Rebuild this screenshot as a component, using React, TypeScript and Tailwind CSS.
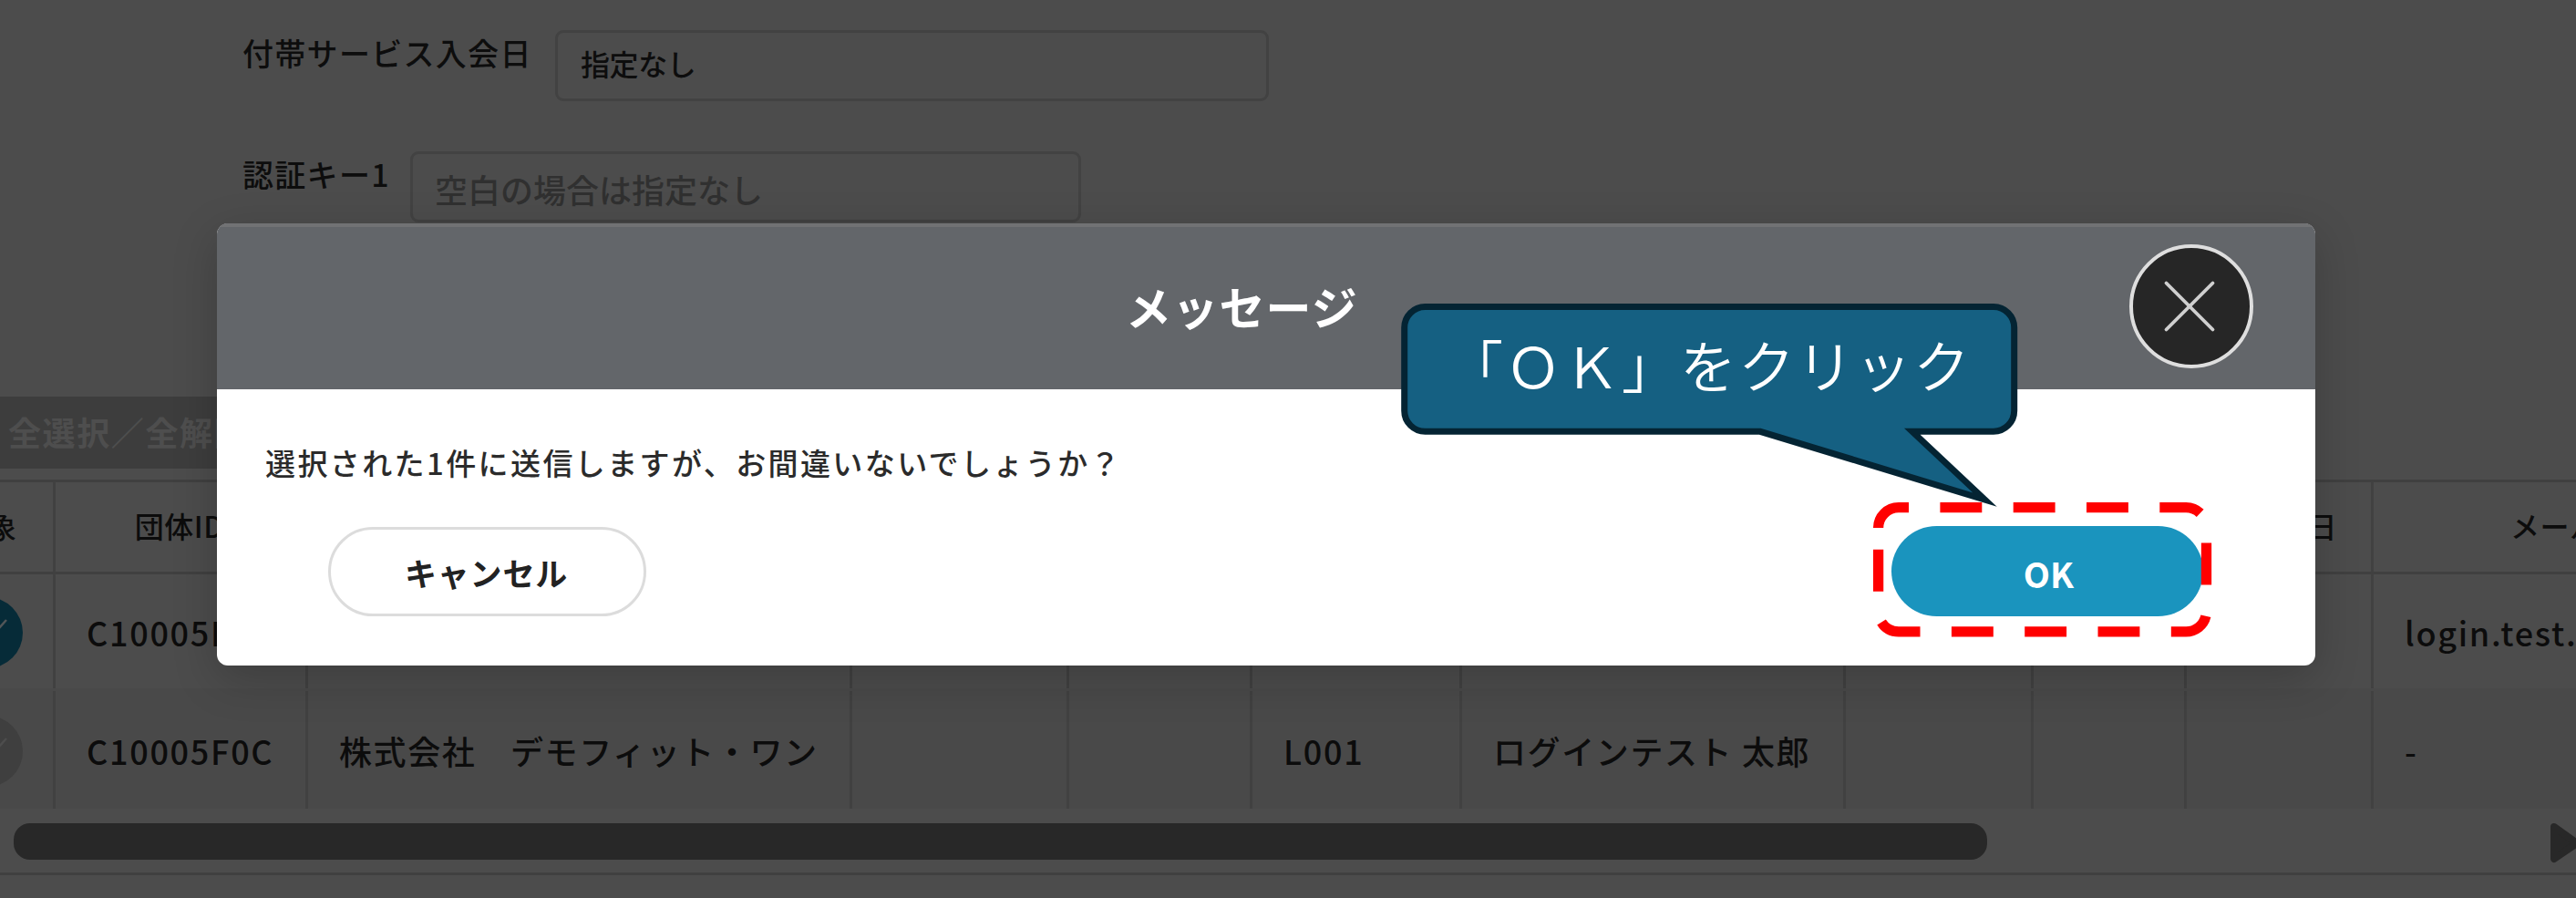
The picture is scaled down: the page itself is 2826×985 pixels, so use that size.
import { X } from 'lucide-react'

const COLUMNS = [
  { w: 'w-[147px]', head: '対象', headClass: 'justify-center' },
  { w: 'w-[277px]', head: '団体ID', headClass: 'justify-center pr-[2px]' },
  { w: 'w-[597px]', head: '', headClass: '' },
  { w: 'w-[238px]', head: '', headClass: '' },
  { w: 'w-[201px]', head: '', headClass: '' },
  { w: 'w-[230px]', head: '', headClass: '' },
  { w: 'w-[421px]', head: '', headClass: '' },
  { w: 'w-[206px]', head: '', headClass: '' },
  { w: 'w-[168px]', head: '', headClass: '' },
  { w: 'w-[205px]', head: '日', headClass: 'justify-end pr-[37px]' },
  { w: 'w-[500px]', head: 'メール', headClass: 'justify-start pl-[150px]' },
]

const ROWS = [
  {
    checked: true,
    rowClass: 'h-[125px]',
    cells: ['C10005F0C', '', '', '', '', '', '', '', '', 'login.test.o'],
  },
  {
    checked: false,
    rowClass: 'h-[132px] border-t-[3px] border-[#494949] bg-[#494949]',
    cells: ['C10005F0C', '株式会社　デモフィット・ワン', '', '', 'L001', 'ログインテスト 太郎', '', '', '', '-'],
  },
]

function CheckCircle({ checked }: { checked: boolean }) {
  return (
    <span
      className={`flex size-[78px] items-center justify-center rounded-full ${
        checked ? 'bg-[#062b38] text-[#525658]' : 'bg-[#3f3f3f] text-[#4d4d4d]'
      }`}
    >
      <svg viewBox="0 0 78 78" className="size-full" fill="none" stroke="currentColor" strokeWidth="2.5">
        <path d="M20 38 L35 53 L60 25" />
      </svg>
    </span>
  )
}

function SearchForm() {
  return (
    <div className="flex h-[435px] flex-col pt-[33px] pl-[266px] font-medium text-[#0d0d0d]">
      <div className="flex h-[133px] items-start">
        <label className="w-[343px] text-[34px] leading-[50px] tracking-[1.3px]">付帯サービス入会日</label>
        <div className="flex h-[78px] w-[783px] items-center rounded-[9px] border-[3px] border-[#424242] pb-[6px] pl-[25px] text-[32px] tracking-[-0.4px]">
          指定なし
        </div>
      </div>
      <div className="flex items-start">
        <label className="w-[184px] text-[34px] leading-[50px] tracking-[1.3px]">認証キー1</label>
        <div className="flex h-[78px] w-[736px] items-center rounded-[9px] border-[3px] border-[#424242] pt-1 pl-[24px] text-[36px] text-[#303030]">
          空白の場合は指定なし
        </div>
      </div>
    </div>
  )
}

function ResultTable() {
  return (
    <div className="-ml-[86px] w-[3193px] border-t-[3px] border-[#404040] font-medium text-[#0c0c0c]">
      <div className="flex h-[101px] border-b-[3px] border-[#404040]">
        {COLUMNS.map((col, i) => (
          <div
            key={i}
            className={`flex shrink-0 items-center border-r-[3px] border-[#414141] pb-[4px] text-[32px] tracking-[0.5px] ${col.w} ${col.headClass}`}
          >
            {col.head}
          </div>
        ))}
      </div>
      {ROWS.map((row, r) => (
        <div key={r} className={`flex ${row.rowClass}`}>
          <div className="flex w-[147px] shrink-0 items-center justify-center border-r-[3px] border-[#414141] pt-[3px]">
            <CheckCircle checked={row.checked} />
          </div>
          {row.cells.map((cell, i) => (
            <div
              key={i}
              className={`flex shrink-0 items-center whitespace-nowrap border-r-[3px] border-[#414141] pl-[34px] text-[36px] ${COLUMNS[i + 1].w} ${
                /^[\w.-]+$/.test(cell) ? 'tracking-[1.7px]' : 'tracking-[1.6px]'
              }`}
            >
              {cell}
            </div>
          ))}
        </div>
      ))}
    </div>
  )
}

function ScrollBar() {
  return (
    <div className="flex h-[73px] items-start border-b-[3px] border-[#404040] pt-[16px] pl-[15px]">
      <div className="h-[40px] w-[2165px] rounded-[18px] bg-[#282828]" />
      <svg className="ml-[617px] h-[44px] w-[29px] shrink-0" viewBox="0 0 29 44">
        <path
          d="M5 4 L30 22 L5 39 Z"
          fill="#282828"
          stroke="#282828"
          strokeWidth="8"
          strokeLinejoin="round"
        />
      </svg>
    </div>
  )
}

function MessageDialog() {
  return (
    <div className="absolute top-[245px] left-[238px] flex h-[485px] w-[2302px] flex-col overflow-hidden rounded-[12px] bg-white shadow-[0_14px_50px_rgba(0,0,0,0.2)]">
      <div className="flex h-[182px] items-center border-t-[4px] border-[#717274] bg-[#63666a] pr-[68px] pb-[5px]">
        <h2 className="flex-1 pl-[151px] text-center text-[50px] font-bold tracking-[1.2px] text-white">メッセージ</h2>
        <button className="flex size-[136px] items-center justify-center rounded-full border-[4px] border-[#dedede] bg-[#262626] pr-[4px]">
          <X className="size-[102px] text-[#cfcfcf]" strokeWidth={0.9} />
        </button>
      </div>
      <p className="pt-[55px] pl-[53px] text-[33px] leading-[50px] font-medium tracking-[2.4px] text-[#2b2b2b]">
        選択された1件に送信しますが、お間違いないでしょうか？
      </p>
      <div className="flex justify-between pt-[45px] pr-[123px] pl-[122px]">
        <button className="mt-px h-[98px] w-[349px] rounded-full border-[3px] border-[#dcdcdc] pt-[2px] pr-[2px] text-[35px] font-bold tracking-[0.8px] text-[#222]">
          キャンセル
        </button>
        <button className="h-[99px] w-[342px] rounded-full bg-[#1a94be] pt-[3px] pl-[3px] text-[38px] font-bold text-white">
          OK
        </button>
      </div>
    </div>
  )
}

function Annotation() {
  return (
    <>
      <svg className="absolute top-[540px] left-[2040px] h-[170px] w-[400px]" viewBox="2040 540 400 170" fill="none">
        <path
          d="M2060.6 579 A22.3 22.3 0 0 1 2082.9 556.7 H2398.2 A22.3 22.3 0 0 1 2420.5 579 V670.6 A22.3 22.3 0 0 1 2398.2 692.9 H2082.9 A22.3 22.3 0 0 1 2060.6 670.6 Z"
          stroke="#ff0000"
          strokeWidth="11.3"
          strokeDasharray="45.9 34.4"
        />
      </svg>
      <svg className="absolute top-[325px] left-[1530px] h-[240px] w-[700px]" viewBox="1530 325 700 240">
        <path
          d="M1563.5 336.5 H2187 A22.8 22.8 0 0 1 2209.7 359.3 V450.5 A22.8 22.8 0 0 1 2187 473.3 H2097.8 L2177.4 548 L1931 473.3 H1563.5 A22.8 22.8 0 0 1 1540.7 450.5 V359.3 A22.8 22.8 0 0 1 1563.5 336.5 Z"
          fill="#156082"
          stroke="#042433"
          strokeWidth="7"
          strokeMiterlimit="10"
        />
      </svg>
      <p className="absolute top-[333px] left-[1537px] flex h-[144px] w-[676px] items-center justify-center pb-[12px] text-[62px] font-[350] tracking-[2px] whitespace-nowrap text-white">
        「ＯＫ」をクリック
      </p>
    </>
  )
}

export default function App() {
  return (
    <main
      lang="ja"
      className="relative h-[985px] w-[2826px] overflow-hidden bg-[#4c4c4c] font-['Noto_Sans_CJK_JP',sans-serif]"
    >
      <SearchForm />
      <div className="mb-[12px] flex h-[79px] w-[400px] items-center bg-[#3d3d3d] pb-[3px] pl-[9px] text-[36px] font-bold tracking-[1.6px] whitespace-nowrap text-[#4e4e4e]">
        全選択／全解除
      </div>
      <ResultTable />
      <ScrollBar />
      <MessageDialog />
      <Annotation />
    </main>
  )
}
